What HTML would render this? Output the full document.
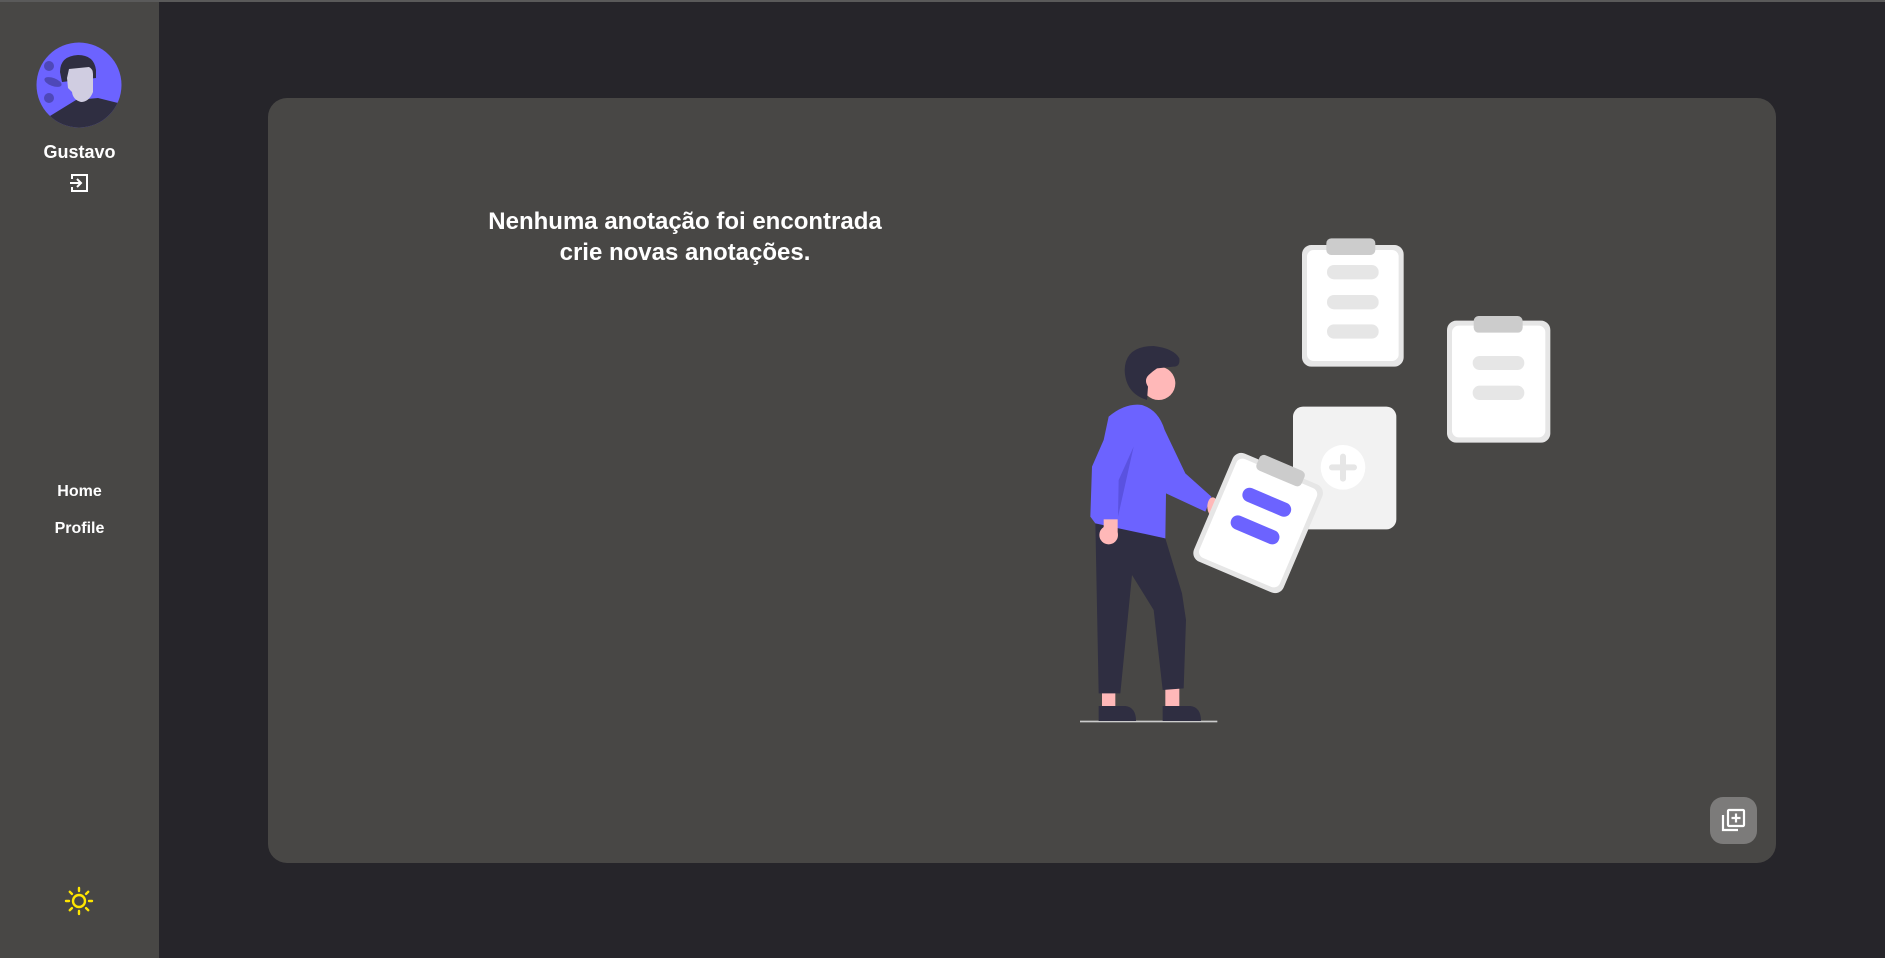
<!DOCTYPE html>
<html><head><meta charset="utf-8">
<style>
*{margin:0;padding:0;box-sizing:border-box}
html,body{width:1885px;height:958px;overflow:hidden;background:#26252a;font-family:"Liberation Sans",sans-serif}
.top{position:absolute;left:0;top:0;width:1885px;height:2px;background:#5a5a5a}
.side{position:absolute;left:0;top:2px;width:159px;height:956px;background:#484745}
.name{position:absolute;left:0;width:159px;top:140px;text-align:center;color:#fff;font-weight:bold;font-size:18px}
.nav{position:absolute;left:0;width:159px;text-align:center;color:#fff;font-weight:bold;font-size:16px}
.card{position:absolute;left:268px;top:98px;width:1508px;height:765px;background:#484745;border-radius:19px}
.msg{position:absolute;left:385px;width:600px;top:206px;text-align:center;color:#fff;font-weight:bold;font-size:24px;line-height:31px}
.btn{position:absolute;left:1710px;top:797px;width:47px;height:47px;border-radius:13px;background:#7c7b7a}
</style></head><body>
<div class="top"></div>
<div class="side">
  <svg style="position:absolute;left:36px;top:40px" width="86" height="86" viewBox="0 0 86 86">
    <defs><clipPath id="c"><circle cx="43" cy="43" r="42.5"/></clipPath></defs>
    <g clip-path="url(#c)">
      <rect width="86" height="86" fill="#6c63ff"/>
      <circle cx="13" cy="24" r="5" fill="#4e48b8"/>
      <circle cx="13" cy="56" r="5" fill="#4e48b8"/>
      <ellipse cx="17" cy="40" rx="9" ry="4" fill="#4e48b8" transform="rotate(20 17 40)"/>
      <path d="M0 95 L14 74 L40 58 L62 56 L86 62 L86 95 Z" fill="#2f2e41"/>
      <path d="M24 30 Q24 14 42 13 Q58 13 60 28 L60 36 L26 40 Z" fill="#2f2e41"/>
      <path d="M33 27 L53 25 Q57 27 57 32 L57 50 Q53 60 45 60 Q37 58 36 50 L32 46 L31 36 Z" fill="#d0cde1"/>
    </g>
  </svg>
  <div class="name">Gustavo</div>
  <svg style="position:absolute;left:69px;top:171px" width="20" height="20" viewBox="0 0 20 20" fill="none" stroke="#fff" stroke-width="2">
    <path d="M3 6 V2 H18 V18 H3 V14"/><path d="M1 10 H12 M8 6 L12 10 L8 14"/>
  </svg>
  <div class="nav" style="top:481px">Home</div>
  <div class="nav" style="top:518px">Profile</div>
  <svg style="position:absolute;left:64px;top:884px" width="30" height="30" viewBox="0 0 30 30" fill="none" stroke="#ffe600" stroke-width="2.4" stroke-linecap="round">
    <circle cx="15" cy="15" r="6"/>
    <path d="M15 2V5M15 25V28M2 15H5M25 15H28M5.8 5.8L7.9 7.9M22.1 22.1L24.2 24.2M5.8 24.2L7.9 22.1M22.1 7.9L24.2 5.8"/>
  </svg>
</div>
<div class="card"></div>
<div class="msg">Nenhuma anotação foi encontrada<br>crie novas anotações.</div>

<svg style="position:absolute;left:1050px;top:220px" width="540" height="520" viewBox="0 0 1568 1560">
  <rect x="730" y="75" width="305" height="365" rx="28" fill="#e6e6e6"/>
  <rect x="745" y="90" width="275" height="333" rx="20" fill="#fff"/>
  <rect x="803" y="55" width="147" height="50" rx="15" fill="#ccc"/>
  <rect x="805" y="135" width="155" height="43" rx="21" fill="#e6e6e6"/>
  <rect x="805" y="225" width="155" height="43" rx="21" fill="#e6e6e6"/>
  <rect x="805" y="313" width="155" height="43" rx="21" fill="#e6e6e6"/>
  <rect x="1165" y="302" width="310" height="366" rx="28" fill="#e6e6e6"/>
  <rect x="1180" y="317" width="280" height="335" rx="20" fill="#fff"/>
  <rect x="1245" y="288" width="147" height="50" rx="15" fill="#ccc"/>
  <rect x="1242" y="408" width="155" height="42" rx="21" fill="#e6e6e6"/>
  <rect x="1242" y="497" width="155" height="43" rx="21" fill="#e6e6e6"/>
  <rect x="703" y="560" width="310" height="368" rx="30" fill="#f2f2f2"/>
  <circle cx="853" cy="742" r="67" fill="#fff"/>
  <path d="M853 710V776M820 742H886" stroke="#e6e6e6" stroke-width="18" stroke-linecap="round"/>
  <rect x="64" y="1502" width="412" height="5" fill="#ccc"/>
  <rect x="130" y="1410" width="40" height="55" fill="#ffb8b8"/>
  <rect x="320" y="1400" width="42" height="65" fill="#ffb8b8"/>
  <path d="M120 1458 H200 Q232 1462 232 1503 H120 Z" fill="#2f2e41"/>
  <path d="M312 1458 H395 Q427 1462 427 1503 H312 Z" fill="#2f2e41"/>
  <path d="M110 905 L320 955 L370 1120 L382 1200 L375 1405 L312 1410 L285 1170 L220 1065 L185 1420 L120 1420 Z" fill="#2f2e41"/>
  <path d="M150 590 Q200 548 250 555 Q300 570 318 630 L380 760 L458 830 L440 875 L322 820 L320 955 L110 910 L95 890 L100 740 L135 660 Z" fill="#6c63ff"/>
  <path d="M225 680 L180 780 L178 890 Z" fill="#5a52e0"/>
  <circle cx="150" cy="945" r="28" fill="#ffb8b8"/>
  <rect x="135" y="898" width="42" height="45" fill="#ffb8b8"/>
  <ellipse cx="462" cy="860" rx="16" ry="28" fill="#ffb8b8"/>
  <circle cx="300" cy="490" r="50" fill="#ffb8b8"/>
  <path d="M265 540 Q200 520 198 450 Q200 378 285 378 Q345 385 362 415 Q365 440 345 440 L295 445 Q280 455 270 465 Q255 480 268 500 Z" fill="#2f2e41"/>
  <g transform="rotate(23 598 910)">
    <rect x="452" y="733" width="292" height="352" rx="28" fill="#e6e6e6"/>
    <rect x="467" y="748" width="262" height="322" rx="20" fill="#fff"/>
    <rect x="525" y="713" width="147" height="50" rx="15" fill="#ccc"/>
    <rect x="520" y="820" width="155" height="43" rx="21" fill="#6c63ff"/>
    <rect x="520" y="910" width="155" height="43" rx="21" fill="#6c63ff"/>
  </g>
</svg>

<div class="btn">
  <svg style="position:absolute;left:10px;top:10px" width="27" height="27" viewBox="0 0 27 27" fill="none" stroke="#fff" stroke-width="2.2">
    <path d="M3 8V23H18"/>
    <rect x="8" y="3" width="16" height="16" rx="1"/>
    <path d="M16 6.5V15.5M11.5 11H20.5"/>
  </svg>
</div>
</body></html>
